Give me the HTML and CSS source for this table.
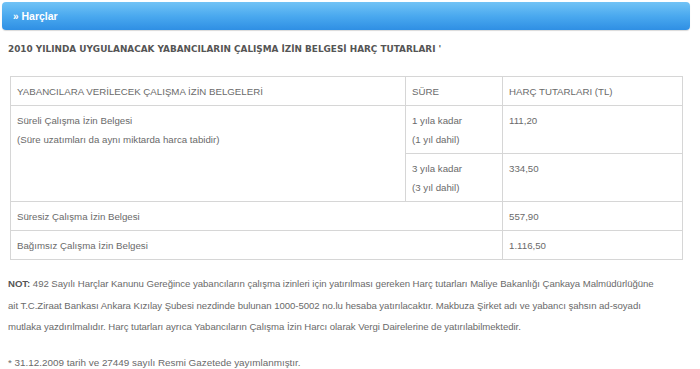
FILE: index.html
```html
<!DOCTYPE html>
<html lang="tr">
<head>
<meta charset="utf-8">
<title>Harçlar</title>
<link rel="stylesheet" href="styles.css">
</head>
<body>
<div class="page">
  <div class="bar"><span class="raquo">»</span> Harçlar</div>
  <h1 class="title">2010 YILINDA UYGULANACAK YABANCILARIN ÇALIŞMA İZİN BELGESİ HARÇ TUTARLARI '</h1>
  <table class="fees">
    <colgroup>
      <col class="c1"><col class="c2"><col class="c3">
    </colgroup>
    <tr class="head">
      <td>YABANCILARA VERİLECEK ÇALIŞMA İZİN BELGELERİ</td>
      <td>SÜRE</td>
      <td>HARÇ TUTARLARI (TL)</td>
    </tr>
    <tr>
      <td rowspan="2">Süreli Çalışma İzin Belgesi<br>(Süre uzatımları da aynı miktarda harca tabidir)</td>
      <td>1 yıla kadar<br>(1 yıl dahil)</td>
      <td>111,20</td>
    </tr>
    <tr>
      <td>3 yıla kadar<br>(3 yıl dahil)</td>
      <td>334,50</td>
    </tr>
    <tr>
      <td colspan="2">Süresiz Çalışma İzin Belgesi</td>
      <td>557,90</td>
    </tr>
    <tr>
      <td colspan="2">Bağımsız Çalışma İzin Belgesi</td>
      <td>1.116,50</td>
    </tr>
  </table>
  <p class="note"><b>NOT:</b> 492 Sayılı Harçlar Kanunu Gereğince yabancıların çalışma izinleri için yatırılması gereken Harç tutarları Maliye Bakanlığı Çankaya Malmüdürlüğüne<br>ait T.C.Ziraat Bankası Ankara Kızılay Şubesi nezdinde bulunan 1000-5002 no.lu hesaba yatırılacaktır. Makbuza Şirket adı ve yabancı şahsın ad-soyadı<br>mutlaka yazdırılmalıdır. Harç tutarları ayrıca Yabancıların Çalışma İzin Harcı olarak Vergi Dairelerine de yatırılabilmektedir.</p>
  <p class="foot">* 31.12.2009 tarih ve 27449 sayılı Resmi Gazetede yayımlanmıştır.</p>
</div>
</body>
</html>
```

FILE: styles.css
```css
html, body {
  margin: 0;
  padding: 0;
  background: #ffffff;
}
body {
  font-family: "Liberation Sans", Arial, sans-serif;
  font-size: 9.7px;
  color: #6a6a6a;
}
.page {
  padding: 2px 10px 0 2px;
}
.bar {
  height: 28px;
  line-height: 28px;
  border-radius: 4px;
  background: linear-gradient(to bottom, #71c3f6 0%, #4aa9ef 50%, #2f8fe4 100%);
  color: #ffffff;
  font-weight: bold;
  font-size: 10.5px;
  padding-left: 11px;
  box-shadow: 0 1px 1px rgba(0,0,0,0.15);
}
.raquo {
  font-size: 10px;
}
.title {
  margin: 12px 0 0 6px;
  font-family: "DejaVu Sans", Verdana, sans-serif;
  font-size: 8.9px;
  font-weight: bold;
  color: #555555;
  line-height: 14px;
}
.fees {
  margin: 20px 0 0 8px;
  border-collapse: collapse;
  width: 672px;
  table-layout: fixed;
}
.c1 { width: 395px; }
.c2 { width: 97px; }
.c3 { width: 180px; }
.fees td {
  border: 1px solid #d6d6d6;
  padding: 5px 6px 4px 6px;
  line-height: 19px;
  vertical-align: top;
}
.note {
  margin: 13px 0 0 6px;
  line-height: 21.5px;
  font-size: 9.6px;
  letter-spacing: -0.04px;
}
.note b {
  color: #555555;
}
.foot {
  margin: 14px 0 0 6px;
  line-height: 21.5px;
  font-size: 9.9px;
}
```
